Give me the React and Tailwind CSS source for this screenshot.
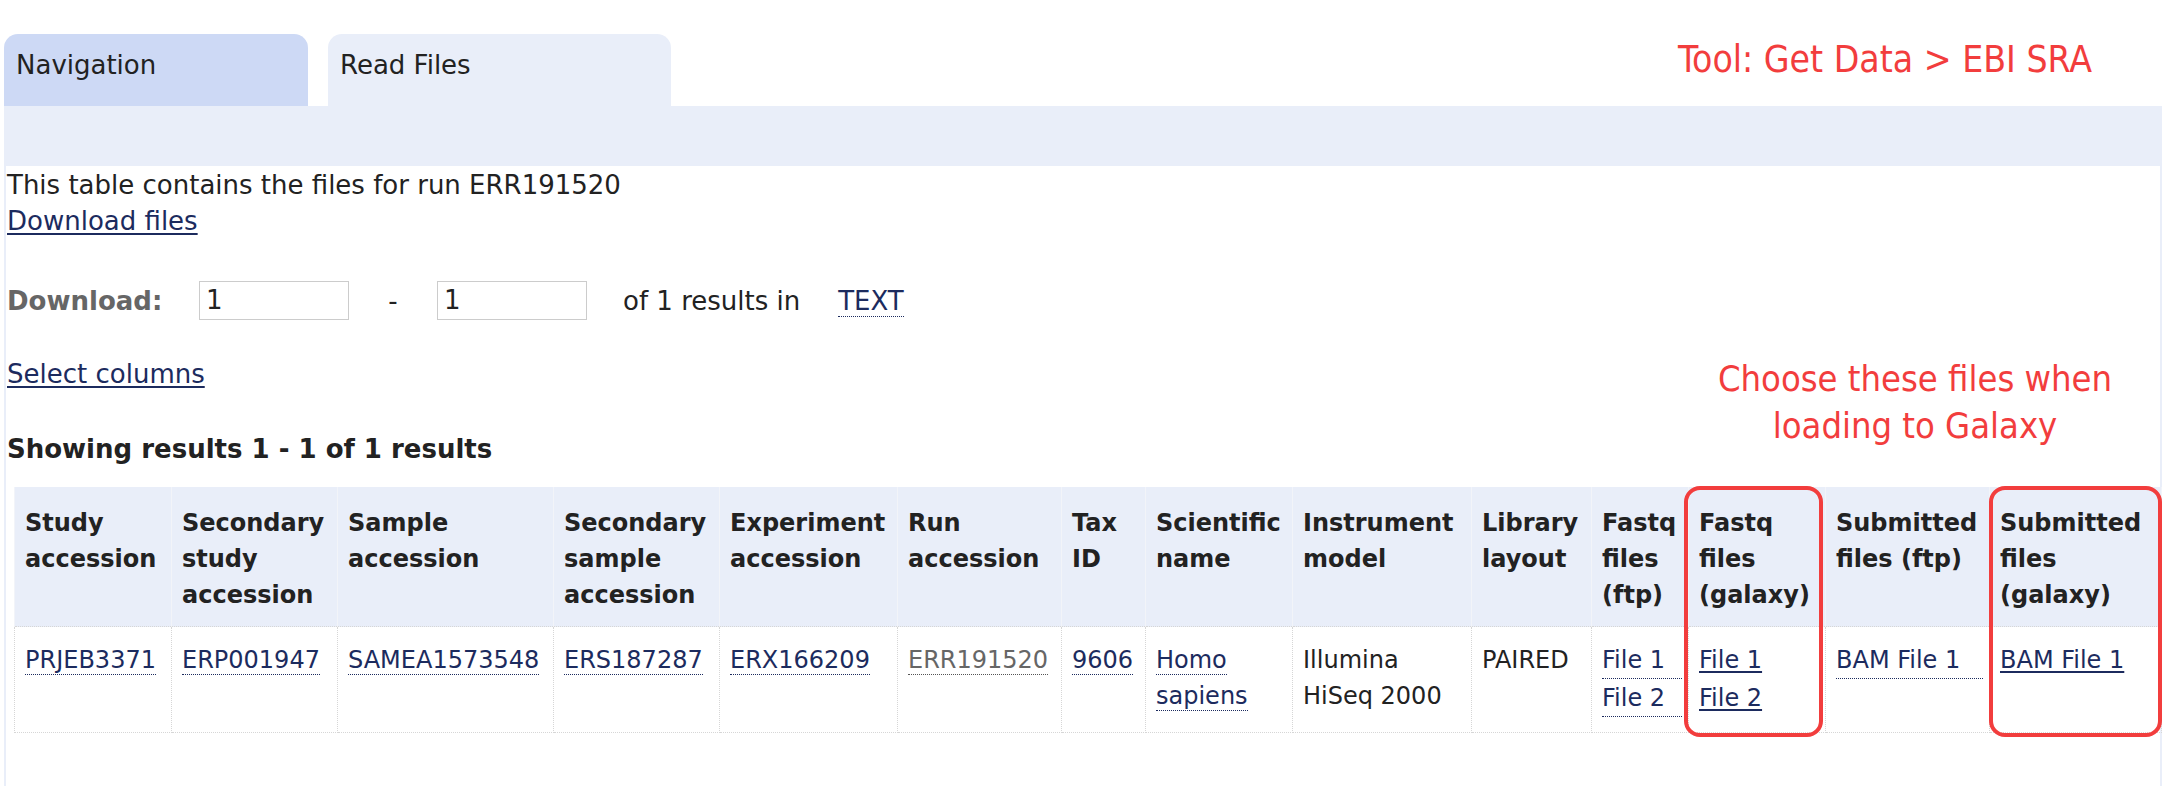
import React from 'react';

const link = 'text-[#1c2b5e]';
const dotted = 'border-b border-dotted border-[#1c2b5e]';

const cols = [157, 166, 216, 166, 178, 164, 84, 147, 179, 120, 97, 137, 164, 172];

const headers = [
  ['Study', 'accession'],
  ['Secondary', 'study', 'accession'],
  ['Sample', 'accession'],
  ['Secondary', 'sample', 'accession'],
  ['Experiment', 'accession'],
  ['Run', 'accession'],
  ['Tax', 'ID'],
  ['Scientific', 'name'],
  ['Instrument', 'model'],
  ['Library', 'layout'],
  ['Fastq', 'files', '(ftp)'],
  ['Fastq', 'files', '(galaxy)'],
  ['Submitted', 'files (ftp)'],
  ['Submitted', 'files', '(galaxy)'],
];

function InlineLink({ children, gray }) {
  return (
    <a className={gray ? 'text-[#666] border-b border-dotted border-[#555]' : `${link} ${dotted}`}>{children}</a>
  );
}

export default function App() {
  const td = 'border border-dotted border-[#d6d6d6] align-top pl-[10px] pr-[6px] pt-[15px] pb-[15px]';
  const redFont = "font-['DejaVu_Sans_Condensed','DejaVu_Sans',sans-serif] text-[#f23d3d]";
  return (
    <div className="relative w-[2166px] h-[786px] bg-white overflow-hidden text-[26px] leading-[36px] text-[#222] font-['DejaVu_Sans','Verdana',sans-serif]">
      {/* tabs */}
      <div className="flex items-stretch pt-[34px] pl-[4px] h-[106px]">
        <div className="w-[304px] rounded-t-[14px] bg-[#cdd9f5] pl-[12px] pt-[13px]">Navigation</div>
        <div className="ml-[20px] w-[343px] rounded-t-[14px] bg-[#e9eef9] pl-[12px] pt-[13px]">Read Files</div>
        <div className={`ml-auto mr-[74px] self-start -mt-[4px] text-[37px] leading-[60px] ${redFont}`}>Tool: Get Data &gt; EBI SRA</div>
      </div>
      <div className="ml-[4px] w-[2158px] h-[60px] bg-[#e9eef9]" />

      {/* panel */}
      <div className="ml-[4px] w-[2158px] h-[620px] border-x-2 border-[#e9eef9] pl-px pt-px">
        <div>This table contains the files for run ERR191520</div>
        <div>
          <a className={`${link} underline underline-offset-[3px]`}>Download files</a>
        </div>

        <div className="mt-[42px] flex items-center h-[39px]">
          <span className="w-[192px] font-bold text-[#666]">Download:</span>
          <div className="w-[150px] h-[39px] border border-[#ccc] pl-[6px] leading-[37px]">1</div>
          <span className="w-[88px] text-center">-</span>
          <div className="w-[150px] h-[39px] border border-[#ccc] pl-[6px] leading-[37px]">1</div>
          <span className="ml-[36px]">of 1 results in</span>
          <span className="ml-[38px]"><InlineLink>TEXT</InlineLink></span>
        </div>

        <div className="mt-[36px]">
          <a className={`${link} underline underline-offset-[3px]`}>Select columns</a>
        </div>

        <div className="mt-[39px] font-bold">Showing results 1 - 1 of 1 results</div>

        <table className="mt-[20px] ml-[7px] table-fixed border-collapse w-[2147px] text-[24px] leading-[36px]">
          <colgroup>
            {cols.map((w, i) => (
              <col key={i} style={{ width: w }} />
            ))}
          </colgroup>
          <thead>
            <tr className="bg-[#e9eef9]">
              {headers.map((h, i) => (
                <th key={i} className="text-left font-bold align-top whitespace-nowrap border-x border-[#f2f4f9] pl-[10px] pt-[18px] pb-[13px] h-[137px]">
                  {h.map((l, j) => (
                    <div key={j}>{l}</div>
                  ))}
                </th>
              ))}
            </tr>
          </thead>
          <tbody>
            <tr className="whitespace-nowrap">
              <td className={td}><InlineLink>PRJEB3371</InlineLink></td>
              <td className={td}><InlineLink>ERP001947</InlineLink></td>
              <td className={td}><InlineLink>SAMEA1573548</InlineLink></td>
              <td className={td}><InlineLink>ERS187287</InlineLink></td>
              <td className={td}><InlineLink>ERX166209</InlineLink></td>
              <td className={td}><InlineLink gray>ERR191520</InlineLink></td>
              <td className={td}><InlineLink>9606</InlineLink></td>
              <td className={td}>
                <InlineLink>Homo</InlineLink>
                <br />
                <InlineLink>sapiens</InlineLink>
              </td>
              <td className={td}>
                Illumina
                <br />
                HiSeq 2000
              </td>
              <td className={td}>PAIRED</td>
              <td className={td}>
                <a className={`block ${link} ${dotted} mb-px`}>File 1</a>
                <a className={`block ${link} ${dotted}`}>File 2</a>
              </td>
              <td className={td}>
                <a className={`block ${link} underline underline-offset-[3px] pb-px mb-px`}>File 1</a>
                <a className={`block ${link} underline underline-offset-[3px] pb-px`}>File 2</a>
              </td>
              <td className={td}>
                <a className={`block ${link} ${dotted}`}>BAM File 1</a>
              </td>
              <td className={td}>
                <a className={`block ${link} underline underline-offset-[3px]`}>BAM File 1</a>
              </td>
            </tr>
          </tbody>
        </table>
      </div>

      {/* annotations */}
      <div className={`absolute left-[1665px] top-[355px] w-[500px] text-center text-[36px] leading-[47px] ${redFont}`}>
        Choose these files when
        <br />
        loading to Galaxy
      </div>
      <div className="absolute left-[1684px] top-[486px] w-[139px] h-[251px] border-[4px] border-[#f23d3d] rounded-[16px]" />
      <div className="absolute left-[1989px] top-[486px] w-[173px] h-[251px] border-[4px] border-[#f23d3d] rounded-[16px]" />
    </div>
  );
}
